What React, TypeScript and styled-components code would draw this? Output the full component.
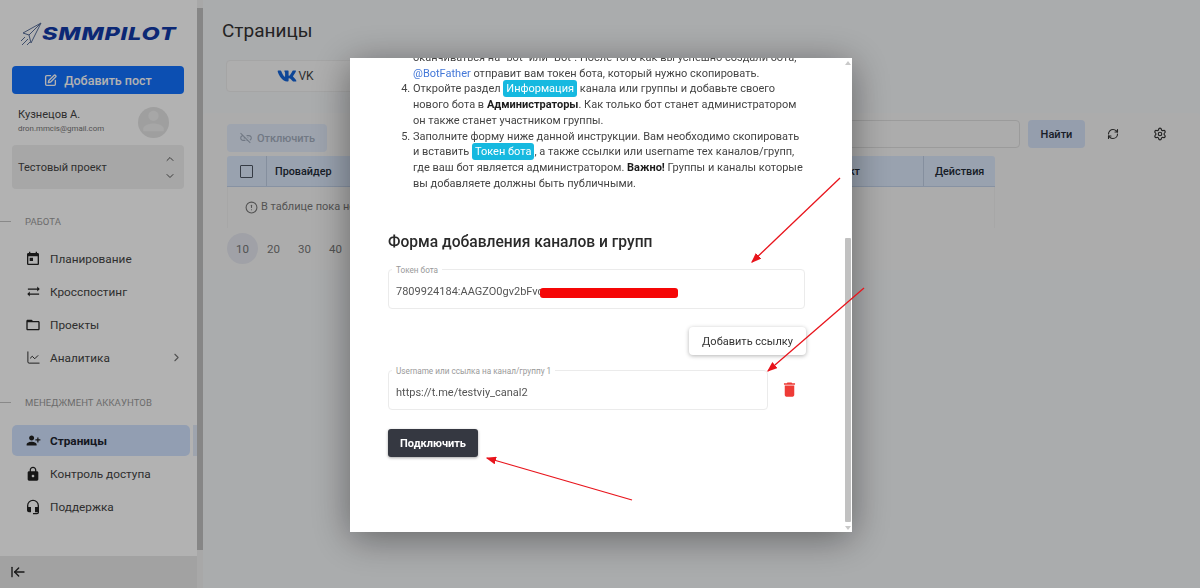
import styled, { createGlobalStyle } from "styled-components";
import {
  ArrowLeftToLine,
  ChartLine,
  ChevronDown,
  ChevronRight,
  ChevronUp,
  CircleAlert,
  RefreshCw,
  Settings,
  SquarePen,
} from "lucide-react";
import { FaVk } from "react-icons/fa";
import {
  MdDelete,
  MdHeadsetMic,
  MdLinkOff,
  MdLock,
  MdOutlineFolderOpen,
  MdPerson,
  MdPersonAddAlt1,
  MdSyncAlt,
  MdToday,
} from "react-icons/md";

const GlobalStyle = createGlobalStyle`
  html, body {
    margin: 0;
    padding: 0;
    height: 100%;
    overflow: hidden;
  }
  * {
    box-sizing: border-box;
  }
  body {
    font-family: Roboto, "Noto Sans", sans-serif;
    color: #2b2f36;
  }
`;

const Page = styled.div`
  width: 1200px;
  height: 588px;
  display: flex;
  background: #f4f6f8;
  overflow: hidden;
`;

const Sidebar = styled.aside`
  width: 197px;
  height: 100%;
  background: #fff;
  display: flex;
  flex-direction: column;
  flex-shrink: 0;
`;

const LogoRow = styled.div`
  height: 66px;
  padding: 22px 0 0 20px;
  display: flex;
  align-items: flex-start;
  gap: 0;
`;

const LogoText = styled.span`
  font-family: Inter, sans-serif;
  font-weight: 800;
  font-style: italic;
  font-size: 18px;
  line-height: 24px;
  letter-spacing: 0.6px;
  color: #123aa8;
  transform: scaleX(1.31);
  transform-origin: left center;
`;

const AddButton = styled.button`
  margin: 0 13px 0 12px;
  height: 28px;
  border: none;
  border-radius: 4px;
  background: #1271ff;
  color: #fff;
  font-family: inherit;
  font-size: 12.5px;
  font-weight: 500;
  display: flex;
  align-items: center;
  justify-content: center;
  gap: 7px;
`;

const UserRow = styled.div`
  height: 51px;
  padding: 13px 28px 0 18px;
  display: flex;
  justify-content: space-between;
`;

const UserName = styled.div`
  font-size: 11.1px;
  line-height: 15px;
  color: #444;
`;

const UserMail = styled.div`
  font-size: 7.9px;
  line-height: 14px;
  color: #777;
`;

const Avatar = styled.div`
  width: 31px;
  height: 31px;
  border-radius: 50%;
  background: #e4e4e4;
  color: #efefef;
  display: flex;
  align-items: flex-end;
  justify-content: center;
  overflow: hidden;
`;

const ProjectSelect = styled.div`
  margin: 0 13px 0 12px;
  height: 44px;
  padding: 0 8px 0 6px;
  background: #f0f0f0;
  border-radius: 4px;
  display: flex;
  align-items: center;
  justify-content: space-between;
  font-size: 11px;
  color: #444;
`;

const Chevrons = styled.div`
  display: flex;
  flex-direction: column;
  gap: 5px;
  color: #555;
`;

const SectionLabel = styled.div<{ $top: number }>`
  margin-top: ${(p) => p.$top}px;
  height: 12px;
  display: flex;
  align-items: center;
  gap: 14px;
  font-size: 9.5px;
  color: #9a9a9a;
  letter-spacing: 0.1px;

  &::before {
    content: "";
    width: 11px;
    height: 1px;
    background: #c4c4c4;
  }
`;

const Menu = styled.nav<{ $top: number }>`
  margin-top: ${(p) => p.$top}px;
  display: flex;
  flex-direction: column;
  gap: 2px;
`;

const MenuItem = styled.div<{ $active?: boolean }>`
  position: relative;
  margin: 0 7px 0 12px;
  height: 31px;
  padding: 0 13px;
  border-radius: 5px;
  display: flex;
  align-items: center;
  gap: 9px;
  font-size: 11.8px;
  font-weight: ${(p) => (p.$active ? 700 : 400)};
  color: ${(p) => (p.$active ? "#1e2530" : "#444")};
  background: ${(p) => (p.$active ? "#d2e3ff" : "transparent")};

  &::after {
    content: "";
    display: ${(p) => (p.$active ? "block" : "none")};
    position: absolute;
    top: 0;
    right: -7px;
    width: 4px;
    height: 31px;
    background: #e2ebfa;
  }
`;

const MenuIcon = styled.span`
  width: 16px;
  height: 16px;
  display: flex;
  align-items: center;
  justify-content: center;
  color: #222;
`;

const MenuArrow = styled.span`
  margin: 0 -6px 0 auto;
  display: flex;
  color: #777;
`;

const Collapse = styled.div`
  margin-top: auto;
  height: 32px;
  padding-left: 10px;
  background: #e8e8e8;
  display: flex;
  align-items: center;
  color: #222;
`;

const PageScroll = styled.div`
  width: 6px;
  height: 100%;
  padding: 8px 0 38px;
  background: #f1f1f1;
  flex-shrink: 0;

  &::before {
    content: "";
    display: block;
    height: 100%;
    background: #c1c1c1;
  }
`;

const Main = styled.main`
  flex: 1;
  min-width: 0;
  display: flex;
  flex-direction: column;
`;

const TitleBlock = styled.div`
  padding: 19px 0 0 19px;
  height: 113px;
`;

const Title = styled.h1`
  margin: 0;
  font-size: 19px;
  line-height: 24px;
  font-weight: 400;
  color: #333;
`;

const Tabs = styled.div`
  margin: 17px 0 0 4px;
  width: 520px;
  height: 32px;
  border: 1px solid #ececec;
  border-radius: 4px;
  background: #f9f9f9;
  display: grid;
  grid-template-columns: 137px 1fr;
`;

const Tab = styled.div`
  display: flex;
  align-items: center;
  justify-content: center;
  gap: 1px;
  font-size: 12px;
  color: #444;
`;

const Card = styled.section`
  height: 157px;
  padding: 7px 0 0 24px;
  background: #f7f7f7;
  border-radius: 4px;
`;

const Toolbar = styled.div`
  height: 36px;
  display: flex;
  gap: 8px;
`;

const DisconnectButton = styled.button`
  margin-top: 4px;
  width: 100px;
  height: 28px;
  border: none;
  border-radius: 4px;
  background: #e2ebfa;
  color: #a2adbd;
  font-family: inherit;
  font-size: 11px;
  font-weight: 500;
  display: flex;
  align-items: center;
  justify-content: center;
  gap: 4px;
`;

const SearchInput = styled.div`
  margin-left: auto;
  width: 400px;
  height: 28px;
  border: 1px solid #dedede;
  border-radius: 4px;
`;

const FindButton = styled.button`
  width: 57px;
  height: 28px;
  border: none;
  border-radius: 4px;
  background: #d6e3f8;
  color: #252c38;
  font-family: inherit;
  font-size: 11px;
  font-weight: 500;
`;

const ToolIcons = styled.div`
  display: flex;
  width: 111px;
  margin-left: -4px;
`;

const ToolIcon = styled.span`
  width: 47px;
  height: 28px;
  display: flex;
  align-items: center;
  justify-content: center;
  color: #333;
`;

const TableHead = styled.div`
  width: 768px;
  height: 31px;
  display: grid;
  grid-template-columns: 39px 150px 392px 115px 72px;
  background: #dbe8fb;
  border-bottom: 1px solid #c2d2ea;
  border-radius: 3px 3px 0 0;
`;

const HeadCell = styled.div<{ $pad?: number }>`
  display: flex;
  align-items: center;
  justify-content: ${(p) => (p.$pad === undefined ? "center" : "flex-start")};
  padding-left: ${(p) => p.$pad ?? 0}px;
  font-size: 10.8px;
  font-weight: 500;
  color: #222a36;
  & + & {
    border-left: 1px solid #bfcde3;
  }
`;

const CheckBox = styled.span`
  width: 13px;
  height: 13px;
  border: 1.5px solid #4c5562;
  border-radius: 1px;
`;

const EmptyRow = styled.div`
  width: 768px;
  height: 41px;
  padding: 0 0 2px 17px;
  border: solid #f0f0f0;
  border-width: 0 1px;
  display: flex;
  align-items: flex-start;
  gap: 3px;
  font-size: 11px;
  line-height: 40px;
  color: #777;

  svg {
    margin-top: 14px;
  }
`;

const Pager = styled.div`
  margin-top: 5px;
  display: flex;
`;

const PageNumber = styled.div<{ $active?: boolean }>`
  width: 31px;
  height: 31px;
  border-radius: 50%;
  display: flex;
  align-items: center;
  justify-content: center;
  font-size: 11.5px;
  color: #777;
  background: ${(p) => (p.$active ? "#e5e7ef" : "transparent")};
`;

const Overlay = styled.div`
  position: fixed;
  inset: 0;
  padding: 2px 0 0 2px;
  background: rgba(0, 0, 0, 0.3);
  display: flex;
  align-items: center;
  justify-content: center;
`;

const Modal = styled.div`
  position: relative;
  width: 502px;
  height: 474px;
  background: #fff;
  overflow: hidden;
  box-shadow: 0 6px 36px rgba(0, 0, 0, 0.42);
`;

const ModalBody = styled.div`
  margin-top: -8px;
  padding: 0 47px 0 38px;
`;

const Steps = styled.ol`
  margin: 0;
  padding: 0 0 0 25px;
  font-size: 11px;
  line-height: 15.7px;
  color: #444;
`;

const Step = styled.li<{ $plain?: boolean }>`
  list-style-type: ${(p) => (p.$plain ? "none" : "decimal")};
`;

const Strong = styled.b`
  font-weight: 700;
  color: #1c1c1c;
`;

const Link = styled.span`
  color: #4478d8;
`;

const Tag = styled.span`
  padding: 2px 3px;
  border-radius: 3px;
  background: #16b9e0;
  color: #fff;
`;

const FormTitle = styled.h2`
  margin: 41px 0 0;
  font-size: 15.6px;
  line-height: 20px;
  font-weight: 500;
  color: #2a2a2a;
`;

const FieldRow = styled.div<{ $top: number }>`
  margin-top: ${(p) => p.$top}px;
  display: flex;
  align-items: center;
`;

const Field = styled.div`
  position: relative;
  flex: 1;
  height: 40px;
  padding: 13px 0 0 7px;
  border: 1px solid #ebebeb;
  border-radius: 4px;
  font-size: 11px;
  line-height: 18px;
  color: #555;
`;

const FieldLabel = styled.span`
  position: absolute;
  top: -5px;
  left: 3px;
  padding: 0 4px;
  background: #fff;
  font-size: 8.2px;
  line-height: 10px;
  color: #999;
`;

const Scribble = styled.span`
  position: absolute;
  top: 18px;
  left: 151px;
  width: 138px;
  height: 10px;
  border-radius: 3px;
  background: #f50707;
`;

const ActionRow = styled.div`
  margin-top: 18px;
  display: flex;
  justify-content: flex-end;
`;

const AddLinkButton = styled.button`
  width: 117px;
  height: 28px;
  margin-right: -1px;
  border: none;
  border-radius: 4px;
  background: #fff;
  box-shadow: 0 1px 4px rgba(0, 0, 0, 0.3);
  color: #333;
  font-family: inherit;
  font-size: 11px;
`;

const TrashSlot = styled.div`
  width: 37px;
  height: 40px;
  padding: 0 0 2px 5px;
  display: flex;
  align-items: center;
  justify-content: center;
  color: #ee3b36;
`;

const ConnectButton = styled.button`
  margin-top: 19px;
  width: 90px;
  height: 28px;
  border: none;
  border-radius: 3px;
  background: #353841;
  box-shadow: 0 1px 3px rgba(0, 0, 0, 0.35);
  color: #fff;
  font-family: inherit;
  font-size: 11px;
  font-weight: 700;
`;

const ModalScroll = styled.div`
  position: absolute;
  top: 0;
  right: 0;
  bottom: 0;
  width: 8px;
  padding: 180px 1px 10px;

  &::before {
    content: "";
    display: block;
    height: 100%;
    background: #c1c1c1;
    border-radius: 1px;
  }
`;

const ScrollArrow = styled.span<{ $down?: boolean }>`
  position: absolute;
  left: 1px;
  ${(p) => (p.$down ? "bottom: 2px;" : "top: 3px;")}
  border-left: 3px solid transparent;
  border-right: 3px solid transparent;
  ${(p) => (p.$down ? "border-top" : "border-bottom")}: 4px solid #c9c9c9;
`;

const Arrows = styled.svg`
  position: absolute;
  inset: 0;
  pointer-events: none;
`;

const arrows = [
  { x1: 840, y1: 178, x2: 752, y2: 262 },
  { x1: 864, y1: 288, x2: 768, y2: 371 },
  { x1: 632, y1: 500, x2: 487, y2: 458 },
];

function Logo() {
  return (
    <svg width="22" height="24" viewBox="0 0 22 24" fill="none" stroke="#5a6f9a" strokeWidth="1">
      <path d="M21 1 L3 11 L9 13 L11 21 Z" />
      <path d="M21 1 L9 13" />
      <path d="M5 15 L1 19 M8 17 L2 23 M10 20 L7 23" />
    </svg>
  );
}

export default function App() {
  return (
    <Page>
      <GlobalStyle />
      <Sidebar>
        <LogoRow>
          <Logo />
          <LogoText>SMMPILOT</LogoText>
        </LogoRow>
        <AddButton>
          <SquarePen size={13} strokeWidth={2.5} />
          Добавить пост
        </AddButton>
        <UserRow>
          <div>
            <UserName>Кузнецов А.</UserName>
            <UserMail>dron.mmcis@gmail.com</UserMail>
          </div>
          <Avatar>
            <MdPerson size={34} />
          </Avatar>
        </UserRow>
        <ProjectSelect>
          Тестовый проект
          <Chevrons>
            <ChevronUp size={12} />
            <ChevronDown size={12} />
          </Chevrons>
        </ProjectSelect>
        <SectionLabel $top={26}>РАБОТА</SectionLabel>
        <Menu $top={16}>
          <MenuItem>
            <MenuIcon><MdToday size={16} /></MenuIcon>
            Планирование
          </MenuItem>
          <MenuItem>
            <MenuIcon><MdSyncAlt size={15} /></MenuIcon>
            Кросспостинг
          </MenuItem>
          <MenuItem>
            <MenuIcon><MdOutlineFolderOpen size={16} /></MenuIcon>
            Проекты
          </MenuItem>
          <MenuItem>
            <MenuIcon><ChartLine size={15} strokeWidth={1.5} /></MenuIcon>
            Аналитика
            <MenuArrow><ChevronRight size={13} /></MenuArrow>
          </MenuItem>
        </Menu>
        <SectionLabel $top={23}>МЕНЕДЖМЕНТ АККАУНТОВ</SectionLabel>
        <Menu $top={17}>
          <MenuItem $active>
            <MenuIcon><MdPersonAddAlt1 size={15} /></MenuIcon>
            Страницы
          </MenuItem>
          <MenuItem>
            <MenuIcon><MdLock size={16} /></MenuIcon>
            Контроль доступа
          </MenuItem>
          <MenuItem>
            <MenuIcon><MdHeadsetMic size={16} /></MenuIcon>
            Поддержка
          </MenuItem>
        </Menu>
        <Collapse>
          <ArrowLeftToLine size={16} />
        </Collapse>
      </Sidebar>
      <PageScroll />
      <Main>
        <TitleBlock>
          <Title>Страницы</Title>
          <Tabs>
            <Tab>
              <FaVk size={20} color="#1565d8" />
              VK
            </Tab>
            <Tab />
          </Tabs>
        </TitleBlock>
        <Card>
          <Toolbar>
            <DisconnectButton>
              <MdLinkOff size={14} />
              Отключить
            </DisconnectButton>
            <SearchInput />
            <FindButton>Найти</FindButton>
            <ToolIcons>
              <ToolIcon><RefreshCw size={12} strokeWidth={2.2} /></ToolIcon>
              <ToolIcon><Settings size={14} /></ToolIcon>
            </ToolIcons>
          </Toolbar>
          <TableHead>
            <HeadCell><CheckBox /></HeadCell>
            <HeadCell $pad={8}>Провайдер</HeadCell>
            <HeadCell $pad={8}>Название</HeadCell>
            <HeadCell $pad={14}>Проект</HeadCell>
            <HeadCell $pad={11}>Действия</HeadCell>
          </TableHead>
          <EmptyRow>
            <CircleAlert size={13} />
            В таблице пока нет данных
          </EmptyRow>
          <Pager>
            <PageNumber $active>10</PageNumber>
            <PageNumber>20</PageNumber>
            <PageNumber>30</PageNumber>
            <PageNumber>40</PageNumber>
          </Pager>
        </Card>
      </Main>
      <Overlay>
        <Modal>
          <ModalBody>
            <Steps start={3}>
              <Step $plain>
                оканчиваться на "bot" или "Bot". После того как вы успешно создали бота,{" "}
                <Link>@BotFather</Link> отправит вам токен бота, который нужно скопировать.
              </Step>
              <Step value={4}>
                Откройте раздел <Tag>Информация</Tag> канала или группы и добавьте своего
                нового бота в <Strong>Администраторы</Strong>. Как только бот станет администратором
                он также станет участником группы.
              </Step>
              <Step value={5}>
                Заполните форму ниже данной инструкции. Вам необходимо скопировать и вставить{" "}
                <Tag>Токен бота</Tag>, а также ссылки или username тех каналов/групп, где ваш
                бот является администратором. <Strong>Важно!</Strong> Группы и каналы которые
                вы добавляете должны быть публичными.
              </Step>
            </Steps>
            <FormTitle>Форма добавления каналов и групп</FormTitle>
            <FieldRow $top={17}>
              <Field>
                <FieldLabel>Токен бота</FieldLabel>
                7809924184:AAGZO0gv2bFvc
                <Scribble />
              </Field>
            </FieldRow>
            <ActionRow>
              <AddLinkButton>Добавить ссылку</AddLinkButton>
            </ActionRow>
            <FieldRow $top={15}>
              <Field>
                <FieldLabel>Username или ссылка на канал/группу 1</FieldLabel>
                https://t.me/testviy_canal2
              </Field>
              <TrashSlot>
                <MdDelete size={19} />
              </TrashSlot>
            </FieldRow>
            <ConnectButton>Подключить</ConnectButton>
          </ModalBody>
          <ModalScroll>
            <ScrollArrow />
            <ScrollArrow $down />
          </ModalScroll>
        </Modal>
        <Arrows width="1200" height="588" viewBox="0 0 1200 588">
          <defs>
            <marker id="head" markerWidth="8" markerHeight="6" refX="7" refY="3" orient="auto">
              <path d="M0 0 L8 3 L0 6 Z" fill="#e8141c" />
            </marker>
          </defs>
          {arrows.map((a) => (
            <line
              key={a.x1}
              {...a}
              stroke="#e8141c"
              strokeWidth="1.3"
              markerEnd="url(#head)"
            />
          ))}
        </Arrows>
      </Overlay>
    </Page>
  );
}
